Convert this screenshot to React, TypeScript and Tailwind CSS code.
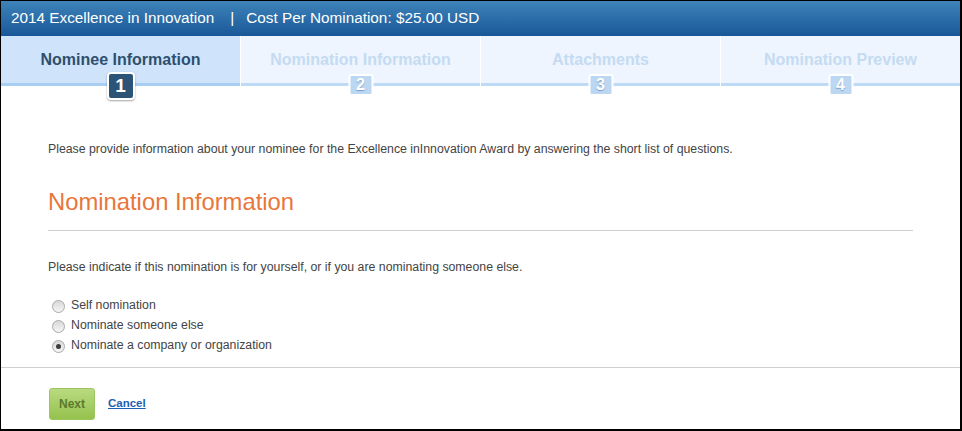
import React from "react";

const tabs = [
  { label: "Nominee Information", n: "1", active: true },
  { label: "Nomination Information", n: "2", active: false },
  { label: "Attachments", n: "3", active: false },
  { label: "Nomination Preview", n: "4", active: false },
];

function Radio({ checked, label }: { checked?: boolean; label: string }) {
  return (
    <div className="flex items-center h-[20px]">
      <div className="ml-[4px] w-[13px] h-[13px] rounded-full border border-[#a9a9a9] bg-gradient-to-b from-[#d8d8d8] to-[#f6f6f6] flex items-center justify-center mt-[2px]">
        {checked && <div className="w-[5px] h-[5px] rounded-full bg-[#3d3d3d]" />}
      </div>
      <span className="ml-[6px] text-[12.3px] text-[#444]">{label}</span>
    </div>
  );
}

export default function App() {
  return (
    <div
      className="w-[962px] h-[431px] bg-white border-l border-t border-black border-r-2 border-b-2 flex flex-col overflow-hidden"
      style={{ fontFamily: '"Liberation Sans", Arial, sans-serif' }}
    >
      <div className="h-[35px] bg-gradient-to-b from-[#3e83b9] to-[#195898] flex items-center pl-[10px] text-white text-[15.3px] shrink-0">
        <span>2014 Excellence in Innovation</span>
        <span className="ml-[16px] mr-[12px]">|</span>
        <span>Cost Per Nomination: $25.00 USD</span>
      </div>
      <div className="flex h-[50px] shrink-0">
        {tabs.map((t, i) => (
          <div
            key={i}
            className={`relative flex-1 flex flex-col ${i < 3 ? "border-r border-white" : ""}`}
          >
            <div
              className={`flex-1 flex justify-center pt-[12px] text-[16px] font-bold ${
                t.active ? "bg-[#cfe4fb] text-[#2e4f6e]" : "bg-[#eef5fe] text-[#c4dbf2]"
              }`}
            >
              {t.label}
            </div>
            <div className={`h-[3px] ${t.active ? "bg-[#a9cef4]" : "bg-[#bfdaf7]"}`} />
            {t.active ? (
              <div className="absolute left-1/2 -translate-x-1/2 top-[36px] w-[28px] h-[28px] rounded-[4px] border-2 border-white bg-[#2c5477] shadow-[0_1px_2px_rgba(0,0,0,0.35)] flex items-center justify-center text-white font-bold text-[19px]">
                {t.n}
              </div>
            ) : (
              <div className="absolute left-1/2 -translate-x-1/2 top-[38px] w-[25px] h-[22px] rounded-[3px] border-2 border-white bg-[#bcd7f1] flex items-center justify-center text-white font-bold text-[16px] [text-shadow:0_1px_1px_rgba(80,120,170,0.6)]">
                {t.n}
              </div>
            )}
          </div>
        ))}
      </div>
      <div className="px-[47px] flex flex-col">
        <p className="mt-[56px] text-[12.3px] leading-[14px] text-[#444]">
          Please provide information about your nominee for the Excellence inInnovation Award by answering the short list of questions.
        </p>
        <h2 className="mt-[32px] text-[23.8px] leading-[28px] text-[#e8763a]">Nomination Information</h2>
        <div className="mt-[14px] h-px bg-[#cfcfcf]" />
        <p className="mt-[29px] text-[12.3px] leading-[14px] text-[#444]">
          Please indicate if this nomination is for yourself, or if you are nominating someone else.
        </p>
        <div className="mt-[21px] flex flex-col">
          <Radio label="Self nomination" />
          <Radio label="Nominate someone else" />
          <Radio checked label="Nominate a company or organization" />
        </div>
      </div>
      <div className="mt-[12px] h-px bg-[#cfcfcf]" />
      <div className="pl-[48px] pt-[20px] flex items-center">
        <button className="w-[46px] h-[32px] rounded-[3px] border border-[#9cc460] bg-gradient-to-b from-[#b9da7f] to-[#95c24d] text-[#5b7a2c] text-[12px] font-bold">
          Next
        </button>
        <a href="#" className="ml-[13px] text-[11.5px] font-bold text-[#1b5fb6] underline">
          Cancel
        </a>
      </div>
    </div>
  );
}
